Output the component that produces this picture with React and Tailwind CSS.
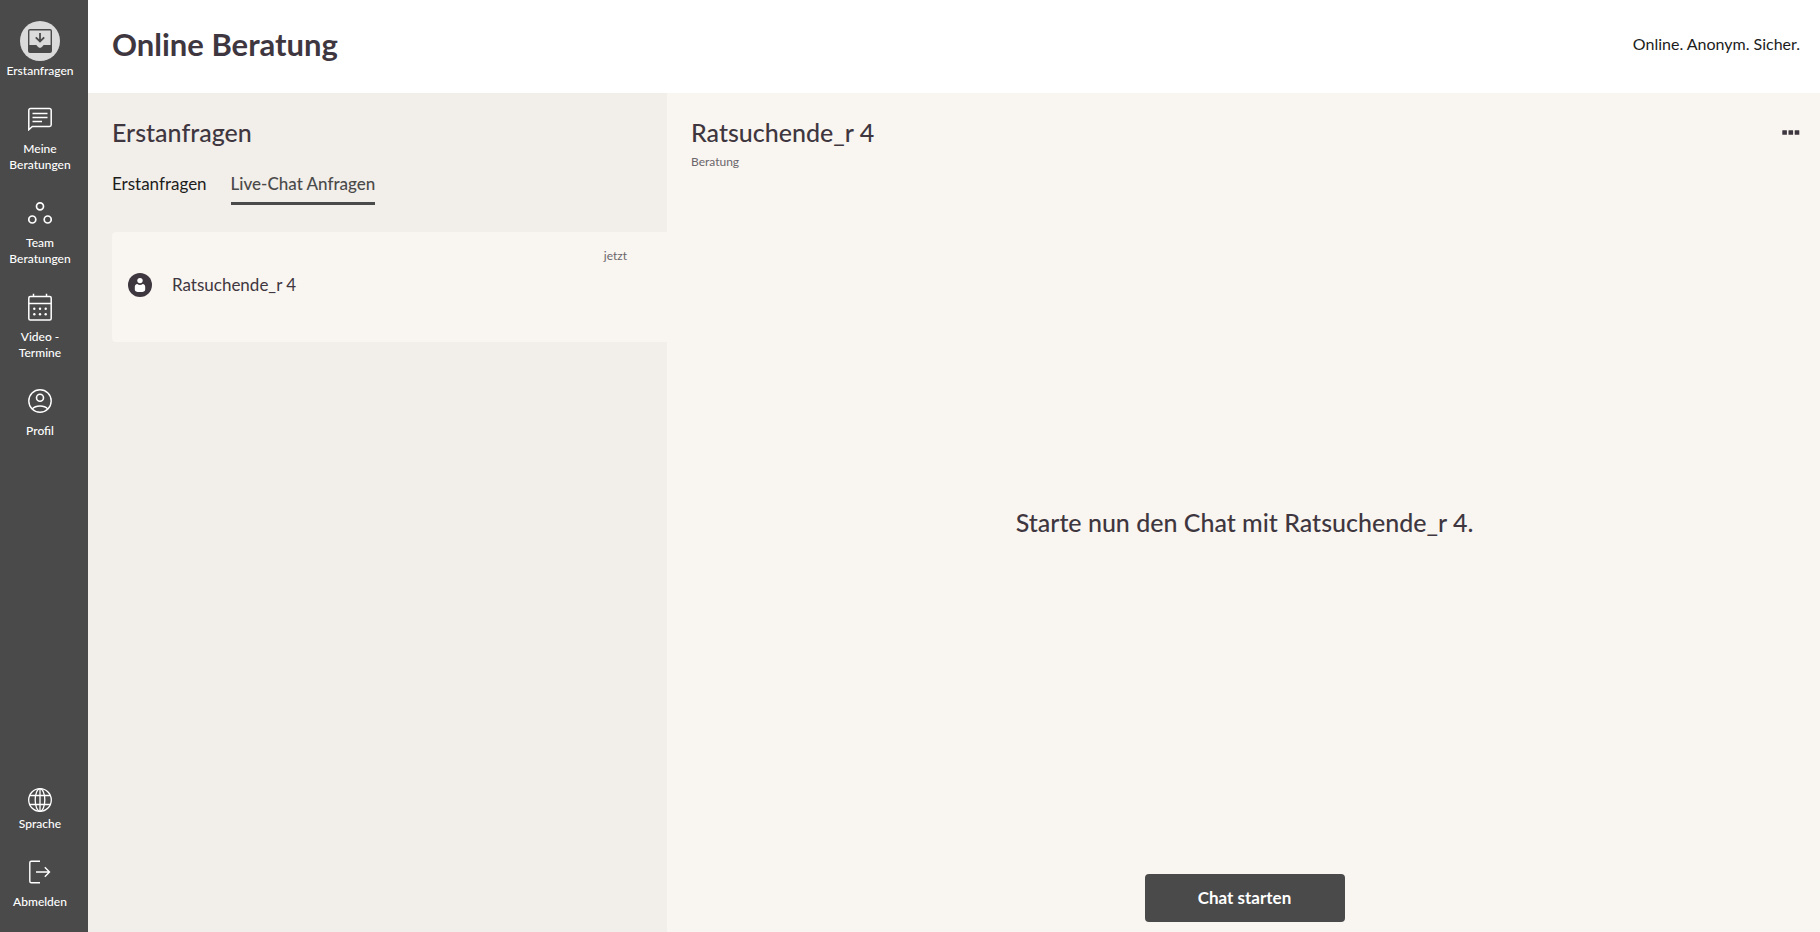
function InboxIcon() {
  return (
    <svg className="size-6" viewBox="0 0 24 24" fill="none" aria-hidden="true">
      <path d="M2 0h20a2 2 0 0 1 2 2v20a2 2 0 0 1-2 2H2a2 2 0 0 1-2-2V2a2 2 0 0 1 2-2Zm-.6 1.9v14.1h6.1c1 0 1.4.5 1.9 1.3.6.9 1.4 1.5 2.6 1.5s2-.6 2.6-1.5c.5-.8.9-1.3 1.9-1.3h6.1V1.900a.5.5 0 0 0-.5-.5H1.900a.5.5 0 0 0-.5.5Z" fill="#4a4a4a" fillRule="evenodd" />
      <path d="M12 4v8M7.800 8.300 12 12.500l4.200-4.200" stroke="#4a4a4a" strokeWidth="1.800" />
    </svg>
  );
}

function MessageIcon() {
  return (
    <svg className="size-6" viewBox="0 0 24 24" fill="none" stroke="currentColor" strokeWidth="1.5" aria-hidden="true">
      <path d="M2.500 1.500h19A1.700 1.700 0 0 1 23.200 3.200v14.600a1.700 1.700 0 0 1-1.700 1.700H4.300L.8 22.700V3.200A1.700 1.700 0 0 1 2.500 1.500Z" />
      <path d="M4.500 6.500h15M4.500 10.500h15M4.500 14.500h9.500" />
    </svg>
  );
}

function TeamIcon() {
  return (
    <svg className="size-6" viewBox="0 0 24 24" fill="none" stroke="currentColor" strokeWidth="1.7" aria-hidden="true">
      <circle cx="12" cy="5.3" r="3.500" />
      <circle cx="4.3" cy="18.5" r="3.500" />
      <circle cx="19.7" cy="18.5" r="3.500" />
    </svg>
  );
}

function CalendarIcon() {
  return (
    <svg className="h-7 w-6" viewBox="0 0 24 28" fill="none" stroke="currentColor" strokeWidth="1.5" aria-hidden="true">
      <rect x=".8" y="3.5" width="22.4" height="23.5" rx="1.5" />
      <path d="M1 10.500h22M5.500.8v3M18.500.8v3" />
      <g fill="currentColor" stroke="none">
        {[6.3, 12, 17.7].map((x) => (
          <g key={x}>
            <circle cx={x} cy="15.8" r="1.2" />
            <circle cx={x} cy="21.3" r="1.2" />
          </g>
        ))}
      </g>
    </svg>
  );
}

function ProfileIcon() {
  return (
    <svg className="size-6" viewBox="0 0 24 24" fill="none" stroke="currentColor" strokeWidth="1.4" aria-hidden="true">
      <circle cx="12" cy="12" r="11.2" />
      <circle cx="12" cy="8.8" r="3.5" strokeWidth="1.6" />
      <path d="M4.200 20c1.800-2 4.600-3 7.800-3s6 1 7.800 3" />
    </svg>
  );
}

function GlobeIcon() {
  return (
    <svg className="size-6" viewBox="0 0 24 24" fill="none" stroke="currentColor" strokeWidth="1.3" aria-hidden="true">
      <circle cx="12" cy="12" r="11.3" />
      <ellipse cx="12" cy="12" rx="4.8" ry="11.3" />
      <path d="M12 .7v22.600M1.600 7.500h20.800M1.600 16.500h20.800" />
    </svg>
  );
}

function LogoutIcon() {
  return (
    <svg className="size-6" viewBox="0 0 24 24" fill="none" stroke="currentColor" strokeWidth="1.4" aria-hidden="true">
      <path d="M12 1.200H3.300a1.500 1.500 0 0 0-1.500 1.500v18.600a1.500 1.500 0 0 0 1.500 1.500H12" />
      <path d="M8 12h13.500M16.800 7.300l4.700 4.700-4.700 4.700" />
    </svg>
  );
}

function AvatarIcon() {
  return (
    <svg className="size-6 shrink-0" viewBox="0 0 24 24" aria-hidden="true">
      <circle cx="12" cy="12" r="12" fill="#3f373f" />
      <circle cx="12" cy="7.6" r="2.7" fill="#fff" />
      <path d="M9.300 11c.8.700 1.700 1 2.700 1s1.900-.3 2.700-1c1.700.2 2.500 1.300 2.500 2.900v2.600c0 1.900-1.700 2.600-5.200 2.600s-5.200-.7-5.200-2.600v-2.600c0-1.600.8-2.700 2.500-2.900Z" fill="#fff" />
    </svg>
  );
}

function NavItem({ icon, lines, active }) {
  return (
    <a href="#" aria-current={active ? "page" : undefined} className="flex w-20 flex-col items-center gap-0.5 text-center">
      <span className={active ? "flex size-10 items-center justify-center rounded-full bg-[#dbdbdb]" : "flex size-10 items-center justify-center"}>
        {icon}
      </span>
      <span className="text-xs leading-4 font-medium">
        {lines.map((line) => (
          <span key={line} className="block">{line}</span>
        ))}
      </span>
    </a>
  );
}

export default function App() {
  return (
    <div className="flex min-h-screen bg-[#f9f5f0] font-['Lato',sans-serif] text-[#3f373f]">
      <nav className="flex w-22 shrink-0 flex-col justify-between bg-[#4a4a4a] pt-[21px] pb-[22px] text-white">
        <div className="flex flex-col gap-5">
          <NavItem active icon={<InboxIcon />} lines={["Erstanfragen"]} />
          <NavItem icon={<MessageIcon />} lines={["Meine", "Beratungen"]} />
          <NavItem icon={<TeamIcon />} lines={["Team", "Beratungen"]} />
          <NavItem icon={<CalendarIcon />} lines={["Video -", "Termine"]} />
          <NavItem icon={<ProfileIcon />} lines={["Profil"]} />
        </div>
        <div className="flex flex-col gap-5">
          <button type="button" className="flex w-20 flex-col items-center gap-1">
            <GlobeIcon />
            <span className="text-xs leading-4 font-medium">Sprache</span>
          </button>
          <NavItem icon={<LogoutIcon />} lines={["Abmelden"]} />
        </div>
      </nav>

      <div className="flex min-w-0 flex-1 flex-col">
        <header className="flex h-[93px] items-center justify-between bg-white pr-5 pb-1.5 pl-6">
          <h1 className="text-[31px] leading-10 font-bold">Online Beratung</h1>
          <p className="text-base text-[#1c1c1c]">Online. Anonym. Sicher.</p>
        </header>

        <div className="grid flex-1 grid-cols-[579fr_1153fr]">
          <section className="bg-[#f2eee9] pt-[23px] pl-6">
            <h2 className="text-[25px] leading-8 font-medium">Erstanfragen</h2>
            <div role="tablist" className="mt-6 flex gap-6">
              <button type="button" role="tab" aria-selected="false" className="border-b-3 border-transparent pb-1.5 text-[17px] leading-6 text-[#1c1c1c]">
                Erstanfragen
              </button>
              <button type="button" role="tab" aria-selected="true" className="border-b-3 border-[#4a4a4a] pb-1.5 text-[17px] leading-6 font-medium text-[#4a4a4a]">
                Live-Chat Anfragen
              </button>
            </div>
            <a href="#" className="mt-[27px] flex h-[110px] flex-col rounded-l bg-[#f9f5f0] pt-4 pr-10 pl-4">
              <span className="self-end text-xs leading-4 text-[#6b666b]">jetzt</span>
              <span className="mt-[9px] flex items-center gap-5">
                <AvatarIcon />
                <span className="text-[17px] leading-6">Ratsuchende_r 4</span>
              </span>
            </a>
          </section>

          <main className="flex flex-col">
            <div className="flex items-start justify-between pt-[23px] pr-5 pl-6">
              <div>
                <h2 className="text-[25px] leading-8 font-medium">Ratsuchende_r 4</h2>
                <p className="mt-1.5 text-xs leading-4 text-[#6b666b]">Beratung</p>
              </div>
              <button type="button" aria-label="Menü" className="flex h-8 items-center">
                <svg className="h-[5px] w-[18px]" viewBox="0 0 18 5" fill="#3f373f" aria-hidden="true">
                  <rect x=".3" y=".2" width="4.6" height="4.6" rx=".4" />
                  <rect x="6.5" y=".2" width="4.6" height="4.6" rx=".4" />
                  <rect x="12.7" y=".2" width="4.6" height="4.6" rx=".4" />
                </svg>
              </button>
            </div>
            <div className="flex flex-1 items-center justify-center pl-0.5">
              <p className="text-[25px] leading-8 font-medium">Starte nun den Chat mit Ratsuchende_r 4.</p>
            </div>
            <div className="flex justify-center pb-2.5 pl-0.5">
              <button type="button" className="h-12 w-50 rounded bg-[#4a4a4a] text-[17px] font-bold text-white">
                Chat starten
              </button>
            </div>
          </main>
        </div>
      </div>
    </div>
  );
}
